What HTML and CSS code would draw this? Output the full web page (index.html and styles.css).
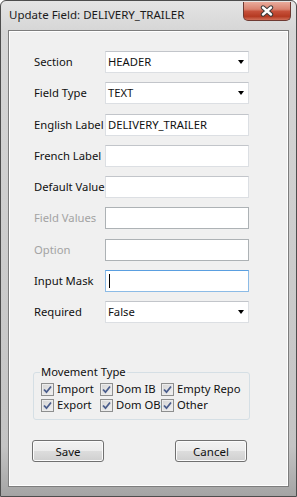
FILE: index.html
```html
<!DOCTYPE html>
<html lang="en">
<head>
  <meta charset="UTF-8" />
  <title>Update Field</title>
  <link rel="stylesheet" href="styles.css">
</head>
<body>
  <div class="window">
    <div class="titlebar">
      <span class="title">Update Field: DELIVERY_TRAILER</span>
      <button class="close" type="button" aria-label="Close">
        <svg width="14" height="12" viewBox="0 0 14 12">
          <path d="M3 2.5 L11 9.5 M11 2.5 L3 9.5" stroke="#3a3a3a" stroke-width="4.4" stroke-linecap="round"/>
          <path d="M3 2.5 L11 9.5 M11 2.5 L3 9.5" stroke="#fff" stroke-width="2.4" stroke-linecap="round"/>
        </svg>
      </button>
    </div>

    <div class="client">
      <form class="fields" onsubmit="event.preventDefault();">
        <label>Section</label>
        <div class="box combo"><span>HEADER</span><i class="arrow"></i></div>

        <label>Field Type</label>
        <div class="box combo"><span>TEXT</span><i class="arrow"></i></div>

        <label>English Label</label>
        <div class="box"><span>DELIVERY_TRAILER</span></div>

        <label>French Label</label>
        <div class="box"></div>

        <label>Default Value</label>
        <div class="box"></div>

        <label class="disabled">Field Values</label>
        <div class="box disabled"></div>

        <label class="disabled">Option</label>
        <div class="box disabled"></div>

        <label>Input Mask</label>
        <div class="box focused"><span class="caret"></span></div>

        <label>Required</label>
        <div class="box combo"><span>False</span><i class="arrow"></i></div>
      </form>

      <fieldset class="group">
        <legend>Movement Type</legend>
        <label class="check"><span class="tick"><svg width="11" height="11" viewBox="0 0 11 11"><path d="M2 5.5 L4.5 8.2 L9 2.5" fill="none" stroke="#4a5d8c" stroke-width="1.8"/></svg></span>Import</label>
        <label class="check"><span class="tick"><svg width="11" height="11" viewBox="0 0 11 11"><path d="M2 5.5 L4.5 8.2 L9 2.5" fill="none" stroke="#4a5d8c" stroke-width="1.8"/></svg></span>Dom IB</label>
        <label class="check"><span class="tick"><svg width="11" height="11" viewBox="0 0 11 11"><path d="M2 5.5 L4.5 8.2 L9 2.5" fill="none" stroke="#4a5d8c" stroke-width="1.8"/></svg></span>Empty Repo</label>
        <label class="check"><span class="tick"><svg width="11" height="11" viewBox="0 0 11 11"><path d="M2 5.5 L4.5 8.2 L9 2.5" fill="none" stroke="#4a5d8c" stroke-width="1.8"/></svg></span>Export</label>
        <label class="check"><span class="tick"><svg width="11" height="11" viewBox="0 0 11 11"><path d="M2 5.5 L4.5 8.2 L9 2.5" fill="none" stroke="#4a5d8c" stroke-width="1.8"/></svg></span>Dom OB</label>
        <label class="check"><span class="tick"><svg width="11" height="11" viewBox="0 0 11 11"><path d="M2 5.5 L4.5 8.2 L9 2.5" fill="none" stroke="#4a5d8c" stroke-width="1.8"/></svg></span>Other</label>
      </fieldset>

      <div class="buttons">
        <button type="button">Save</button>
        <button type="button">Cancel</button>
      </div>
    </div>
  </div>
</body>
</html>
```

FILE: styles.css
```css
/* General */
body {
  margin: 0;
  font-family: "Noto Sans", "Open Sans", sans-serif;
  font-size: 11.25px;
  line-height: 16px;
  color: #000;
}

/* Window frame */
.window {
  box-sizing: border-box;
  width: 297px;
  height: 497px;
  display: flex;
  flex-direction: column;
  padding: 0 7px 9px;
  border: 1px solid #4d4d4d;
  border-radius: 6px 6px 0 0;
  background: linear-gradient(to bottom, #e4e4e4, #d6d6d6 30px, #c4c4c4 90%, #a4a4a4);
}

.titlebar {
  height: 29px;
  display: flex;
  justify-content: space-between;
  align-items: flex-start;
}

.title {
  padding: 6px 0 0 1px;
  font-size: 11.5px;
  color: #1a1a1a;
}

.close {
  width: 48px;
  height: 19px;
  margin: 1px -2px 0 0;
  padding: 0;
  display: flex;
  align-items: center;
  justify-content: center;
  border: 1px solid #6e3a32;
  border-top: none;
  border-radius: 0 0 5px 5px;
  background: linear-gradient(to bottom, #e9ab9c 0%, #d98370 40%, #c6503a 52%, #b53a22 80%, #d0705a 100%);
}

.close svg {
  display: block;
}

/* Client area */
.client {
  flex: 1;
  background: #f0f0f0;
  border: 1px solid #7d7d7d;
  box-shadow: inset 0 0 0 1px #ffffff;
  padding: 20px 0 0 25px;
}

/* Form rows */
.fields {
  display: grid;
  grid-template-columns: 71px 144px;
  grid-auto-rows: 22px;
  row-gap: 9.25px;
  align-items: center;
  margin: 0;
}

.fields label {
  white-space: nowrap;
  color: #111;
}

.fields label.disabled {
  color: #a3a3a3;
}

.box {
  box-sizing: border-box;
  height: 22px;
  display: flex;
  align-items: center;
  padding: 0 2px;
  background: #fff;
  border: 1px solid #dcdfe3;
  border-top-color: #c2c5ca;
  color: #111;
}

.box.disabled {
  border-color: #adb2b5;
}

.box.focused {
  border-color: #8cbbe6;
  border-top-color: #5a9fe0;
}

.combo {
  justify-content: space-between;
  padding-right: 4px;
}

.arrow {
  width: 0;
  height: 0;
  border-left: 3.5px solid transparent;
  border-right: 3.5px solid transparent;
  border-top: 4px solid #000;
}

.caret {
  width: 1px;
  height: 14px;
  margin-left: 1px;
  background: #000;
}

/* Movement type group */
.group {
  box-sizing: border-box;
  width: 217px;
  margin: 41px 0 0 -1px;
  padding: 1px 0 6px 7px;
  border: 1px solid #d5dfe5;
  border-radius: 3px;
  display: grid;
  grid-template-columns: 59px 61px auto;
  grid-auto-rows: 16px;
}

.group legend {
  padding: 0 1px;
  margin-left: -1px;
  color: #111;
}

.check {
  display: flex;
  align-items: center;
  gap: 3px;
  white-space: nowrap;
  color: #111;
}

.tick {
  box-sizing: border-box;
  width: 13px;
  height: 13px;
  flex: none;
  display: flex;
  align-items: center;
  justify-content: center;
  border: 1px solid #8e8f8f;
  background: linear-gradient(135deg, #d4d4d4, #f2f2f2);
  box-shadow: inset 0 0 0 1px #ececec;
}

.tick svg {
  display: block;
}

/* Buttons */
.buttons {
  width: 215px;
  margin: 20px 0 0 -2px;
  display: flex;
  justify-content: space-between;
}

.buttons button {
  width: 72px;
  height: 22px;
  padding: 0;
  font-family: inherit;
  font-size: 11.5px;
  color: #111;
  border: 1px solid #707070;
  border-radius: 3px;
  background: linear-gradient(to bottom, #f2f2f2 0%, #ebebeb 50%, #dddddd 50%, #cfcfcf 100%);
  box-shadow: inset 0 0 0 1px #fbfbfb;
}
```
